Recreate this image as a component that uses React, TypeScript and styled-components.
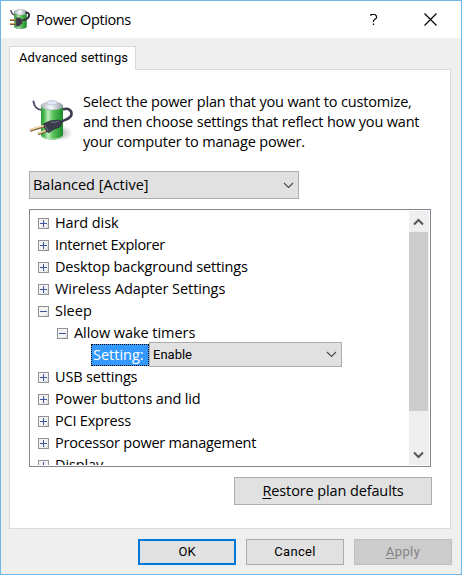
import React from "react";
import styled, { createGlobalStyle, css } from "styled-components";

const GlobalStyle = createGlobalStyle`
  * { box-sizing: border-box; }
  body { margin: 0; background: #f0f0f0; }
`;

const Window = styled.div`
  width: 462px;
  height: 575px;
  display: flex;
  flex-direction: column;
  border: 1px solid #6cb9ea;
  background: #efefef;
  color: #000;
  font: 14.5px/20px "Open Sans", "Noto Sans", sans-serif;
  overflow: hidden;
  white-space: nowrap;
`;

const TitleBar = styled.header`
  height: 37px;
  flex: none;
  display: flex;
  align-items: center;
  background: #fff;
  padding: 0 2px 0 8px;
`;

const Title = styled.h1`
  margin: 0 auto 0 6px;
  font-size: 14.5px;
  font-weight: 400;
`;

const CaptionButton = styled.button`
  width: 57px;
  height: 37px;
  display: grid;
  place-items: center;
  border: 0;
  padding: 0;
  background: none;
`;

const Label = styled.span<{ $spacing?: number }>`
  letter-spacing: ${(p) => p.$spacing ?? 0}px;
`;

const Underlined = styled.span`
  text-decoration: underline;
  text-underline-offset: 2px;
  text-decoration-thickness: 1px;
`;

const Body = styled.main`
  padding: 8px 10px 0 8px;
  flex: 1;
`;

const Tab = styled.div`
  width: 127px;
  height: 24px;
  padding-left: 9px;
  position: relative;
  margin-bottom: -1px;
  background: #fff;
  border: 1px solid #d9d9d9;
  border-bottom: 0;
  font: 13px/22px Roboto, sans-serif;
`;

const Panel = styled.section`
  height: 460px;
  border: 1px solid #d9d9d9;
  background: #fff;
  padding: 22px 18px 0 19px;
  display: flex;
  flex-direction: column;
`;

const Intro = styled.div`
  display: flex;
  height: 60px;
`;

const IntroIcon = styled.div`
  width: 54px;
  padding: 4px 0 0 2px;
`;

const IntroText = styled.p`
  margin: 0;
  display: flex;
  flex-direction: column;
`;

const Combo = styled.div<{ $small?: boolean }>`
  display: flex;
  align-items: center;
  justify-content: space-between;
  flex: none;
  border: 1px solid #adadad;
  background: #e1e1e1;
  ${(p) =>
    p.$small
      ? css`
          width: 193px;
          height: 25px;
          margin-top: -1px;
          padding: 0 4px 0 3px;
          font: 13px/22px Roboto, sans-serif;
        `
      : css`
          width: 270px;
          height: 28px;
          margin-top: 19px;
          padding: 0 4px 0 3px;
        `}
`;

const Tree = styled.div`
  height: 258px;
  width: 402px;
  flex: none;
  margin-top: 10px;
  border: 1px solid #828790;
  padding: 1px;
  display: flex;
`;

const Rows = styled.div`
  flex: 1;
  overflow: hidden;
  padding-top: 1px;
`;

const Row = styled.div<{ $level: number }>`
  height: 22px;
  display: flex;
  align-items: center;
  gap: 6px;
  padding-left: ${(p) => 7 + p.$level * 19}px;
`;

const SettingRow = styled.div`
  height: 22px;
  display: flex;
  align-items: center;
  padding-left: 60px;
`;

const Selected = styled.span`
  width: 58px;
  height: 22px;
  padding-left: 1px;
  border: 1px dotted #000;
  background: #3399ff;
  color: #fff;
  line-height: 20px;
`;

const ScrollBar = styled.div`
  width: 20px;
  background: #efefef;
  display: flex;
  flex-direction: column;
`;

const ScrollArrow = styled.div`
  height: 21px;
  width: 19px;
  display: grid;
  place-items: center;
`;

const Thumb = styled.div`
  width: 19px;
  height: 179px;
  margin-bottom: auto;
  background: #cdcdcd;
`;

const Button = styled.button<{ $primary?: boolean; $wide?: boolean }>`
  width: ${(p) => (p.$wide ? 198 : 98)}px;
  height: ${(p) => (p.$wide ? 28 : 26)}px;
  padding: 0;
  background: #e1e1e1;
  color: #000;
  border: ${(p) => (p.$primary ? "2px solid #0078d7" : "1px solid #adadad")};
  font: ${(p) => (p.$wide ? '14.5px/20px "Open Sans", sans-serif' : "13px/20px Roboto, sans-serif")};
  ${(p) => p.$wide && "align-self: flex-end; margin-top: 10px;"}
  &:disabled {
    color: #838383;
    background: #cccccc;
    border-color: #bfbfbf;
  }
`;

const Footer = styled.footer`
  display: flex;
  justify-content: flex-end;
  gap: 10px;
  margin: 10px -1px 0 0;
`;

const Svg = styled.svg`
  display: block;
  flex: none;
  overflow: visible;
`;

const Gradients = ({ id }: { id: string }) => (
  <defs>
    <linearGradient id={id + "g"} x1="0" x2="1" y1="0" y2="0">
      <stop offset="0" stopColor="#2a9a35" />
      <stop offset=".15" stopColor="#4fbd55" />
      <stop offset=".32" stopColor="#c3efc0" />
      <stop offset=".55" stopColor="#55c257" />
      <stop offset="1" stopColor="#1c8a2b" />
    </linearGradient>
    <linearGradient id={id + "s"} x1="0" x2="1">
      <stop offset="0" stopColor="#a9b4bb" />
      <stop offset=".45" stopColor="#fbfdff" />
      <stop offset="1" stopColor="#8c979e" />
    </linearGradient>
    <radialGradient id={id + "h"}>
      <stop offset="0" stopColor="#777" stopOpacity=".55" />
      <stop offset="1" stopColor="#999" stopOpacity="0" />
    </radialGradient>
  </defs>
);

const SmallPowerIcon = () => (
  <Svg width="21" height="21" viewBox="0 0 42 42">
    <Gradients id="small" />
    <path d="M4 2C4 8 7 11 12 12" fill="none" stroke="#55565f" strokeWidth="3" />
    <path d="M11 5v31c2 4 22 4 24 0V5z" fill="url(#smallg)" stroke="#2c7b37" strokeWidth="1" />
    <path d="M11 5c2-5 22-5 24 0v5c-3 3-21 3-24 0z" fill="url(#smalls)" stroke="#7b8b82" strokeWidth="1" />
    <path d="M33 8c5-2 8 1 7 6s-6 8-17 10" fill="none" stroke="#33333d" strokeWidth="4" />
    <path d="M2 22h13M2 30h13" stroke="#77602f" strokeWidth="3.500" />
    <path d="M2 21h11M2 29h11" stroke="#d4b467" strokeWidth="1.500" />
    <path d="M14 18l7-1 5 4v8l-6 6-6-1z" fill="#393944" stroke="#6c6c76" />
  </Svg>
);

const LargePowerIcon = () => (
  <Svg width="42" height="46" viewBox="0 0 42 46">
    <Gradients id="large" />
    <ellipse cx="31" cy="37" rx="11" ry="8" fill="url(#largeh)" />
    <path d="M2.500 5.500C3 10 6 13.500 11 14" fill="none" stroke="#50516a" strokeWidth="2" strokeLinecap="round" />
    <path d="M10 10v30c3 5 19 5 22 0V10z" fill="url(#largeg)" />
    <path d="M10.500 40c3 4 18 4 21 0" fill="none" stroke="#a9d8ad" />
    <ellipse cx="21" cy="10" rx="11" ry="4" fill="url(#larges)" stroke="#9ba8ae" strokeWidth=".6" />
    <ellipse cx="21" cy="6.800" rx="5.500" ry="2.200" fill="#dfe8f7" stroke="#9eacbd" strokeWidth=".6" />
    <path d="M32 13.500C37 11.500 41 14 40.500 18.500c-.5 4.500-7 5-12.500 8.500" fill="none" stroke="#3a3b52" strokeWidth="2.600" />
    <path d="M-1 34.500l15-4.500M7 38l11-4" stroke="#80613c" strokeWidth="2.600" />
    <path d="M-1 33.800l15-4.500M7 37.300l11-4" stroke="#f4dcae" strokeWidth="1.500" />
    <path d="M12.500 28l6.500-3 9-1 2.500 2.500-1 4-7 3-4.500 3-2.500-1z" fill="#3c3d4c" stroke="#292a39" strokeWidth=".8" />
    <path d="M13.500 29l4 6M19.500 26.500l8.500-1" stroke="#707282" />
  </Svg>
);

const Expander = ({ open }: { open?: boolean }) => (
  <Svg width="11" height="11" shapeRendering="crispEdges">
    <rect x=".5" y=".5" width="10" height="10" fill="#f3f3f3" stroke="#919191" />
    <path d="M6 9.500h4M9.500 6v4" stroke="#dedede" />
    <path d={open ? "M2 5.500h7" : "M2 5.500h7M5.500 2v7"} stroke="#3b529f" />
  </Svg>
);

const Chevron = () => (
  <Svg width="11" height="7" viewBox="0 0 11 7">
    <path d="M1 1l4.500 4.500L10 1" fill="none" stroke="#494949" strokeWidth="1.100" />
  </Svg>
);

const ScrollChevron = ({ down }: { down?: boolean }) => (
  <Svg width="11" height="8" viewBox="0 0 11 8">
    <path d={down ? "M1 1.500L5.500 6 10 1.500" : "M1 6.500L5.500 2 10 6.500"} fill="none" stroke="#555" strokeWidth="2" />
  </Svg>
);

const before: [string, number][] = [
  ["Hard disk", -0.1],
  ["Internet Explorer", -0.3],
  ["Desktop background settings", -0.15],
  ["Wireless Adapter Settings", -0.08],
];

const after: [string, number][] = [
  ["USB settings", -0.17],
  ["Power buttons and lid", -0.15],
  ["PCI Express", -0.2],
  ["Processor power management", -0.24],
  ["Display", -0.1],
];

const TreeItem = ({ text, spacing = 0, level = 0, open }: { text: string; spacing?: number; level?: number; open?: boolean }) => (
  <Row $level={level}>
    <Expander open={open} />
    <Label $spacing={spacing}>{text}</Label>
  </Row>
);

export default function App() {
  return (
    <>
      <GlobalStyle />
      <Window>
        <TitleBar>
          <SmallPowerIcon />
          <Title><Label $spacing={-0.4}>Power Options</Label></Title>
          <CaptionButton>
            <Svg width="8" height="13" viewBox="0 0 8 13">
              <path d="M1 3V1.500h4L6.500 3v2L3.500 7.500V9" fill="none" stroke="#111" strokeWidth="1.200" />
              <path d="M2.800 10.500h1.400V12H2.800z" fill="#111" />
            </Svg>
          </CaptionButton>
          <CaptionButton>
            <Svg width="13" height="13" viewBox="0 0 13 13">
              <path d="M.5.5l12 12M12.500.5l-12 12" stroke="#000" strokeWidth="1.200" />
            </Svg>
          </CaptionButton>
        </TitleBar>
        <Body>
          <Tab><Label $spacing={0.13}>Advanced settings</Label></Tab>
          <Panel>
            <Intro>
              <IntroIcon><LargePowerIcon /></IntroIcon>
              <IntroText>
                <Label $spacing={-0.16}>Select the power plan that you want to customize,</Label>
                <Label $spacing={-0.18}>and then choose settings that reflect how you want</Label>
                <Label $spacing={-0.17}>your computer to manage power.</Label>
              </IntroText>
            </Intro>
            <Combo><Label>Balanced [Active]</Label><Chevron /></Combo>
            <Tree>
              <Rows>
                {before.map(([text, spacing]) => <TreeItem key={text} text={text} spacing={spacing} />)}
                <TreeItem text="Sleep" open />
                <TreeItem text="Allow wake timers" spacing={-0.06} level={1} open />
                <SettingRow>
                  <Selected><Label>Setting:</Label></Selected>
                  <Combo $small><Label>Enable</Label><Chevron /></Combo>
                </SettingRow>
                {after.map(([text, spacing]) => <TreeItem key={text} text={text} spacing={spacing} />)}
              </Rows>
              <ScrollBar>
                <ScrollArrow><ScrollChevron /></ScrollArrow>
                <Thumb />
                <ScrollArrow><ScrollChevron down /></ScrollArrow>
              </ScrollBar>
            </Tree>
            <Button $wide><Label $spacing={-0.12}><Underlined>R</Underlined>estore plan defaults</Label></Button>
          </Panel>
          <Footer>
            <Button $primary><Label>OK</Label></Button>
            <Button><Label $spacing={0.3}>Cancel</Label></Button>
            <Button disabled><Label $spacing={0.4}><Underlined>A</Underlined>pply</Label></Button>
          </Footer>
        </Body>
      </Window>
    </>
  );
}
